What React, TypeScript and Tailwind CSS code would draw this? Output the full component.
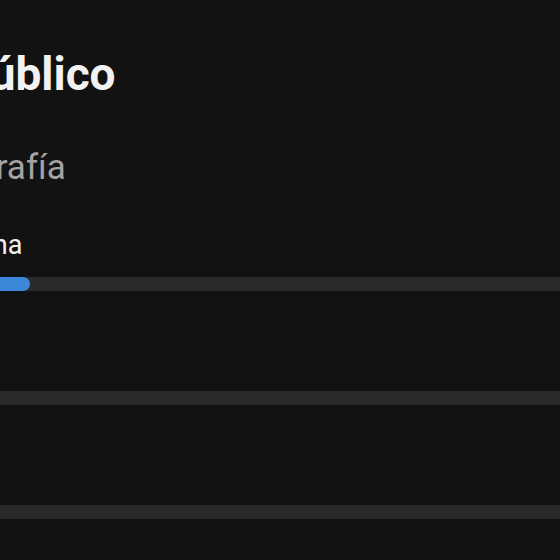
import React from 'react';

const bars = [
  { fill: 70, top: 'mt-[18px]' },
  { fill: 0, top: 'mt-[100px]' },
  { fill: 0, top: 'mt-[100px]' },
];

const App = () => {
  return (
    <div className="h-[560px] w-[560px] overflow-hidden bg-[#121212] font-['Roboto','Liberation_Sans',sans-serif]">
      <div className="flex flex-col pt-[51px]">
        <h1 className="-ml-[40px] text-[46px] leading-[46px] font-bold text-[#f2f2f2] whitespace-nowrap">
          Público
        </h1>
        <p className="mt-[53px] -ml-[94px] text-[35px] leading-[35px] text-[#a3a3a3] whitespace-nowrap">
          Fotografía
        </p>
        <p className="mt-[47px] -ml-[78px] text-[27px] leading-[27px] text-[#f2f2f2] whitespace-nowrap">
          Ninguna
        </p>
        {bars.map((b, i) => (
          <div key={i} className={`${b.top} h-[14px] w-[700px] shrink-0 -ml-[40px] rounded-full bg-[#2a2a2a]`}>
            {b.fill > 0 && <div className="h-full rounded-full bg-[#3b87da]" style={{ width: `${b.fill}px` }} />}
          </div>
        ))}
      </div>
    </div>
  );
};

export default App;
